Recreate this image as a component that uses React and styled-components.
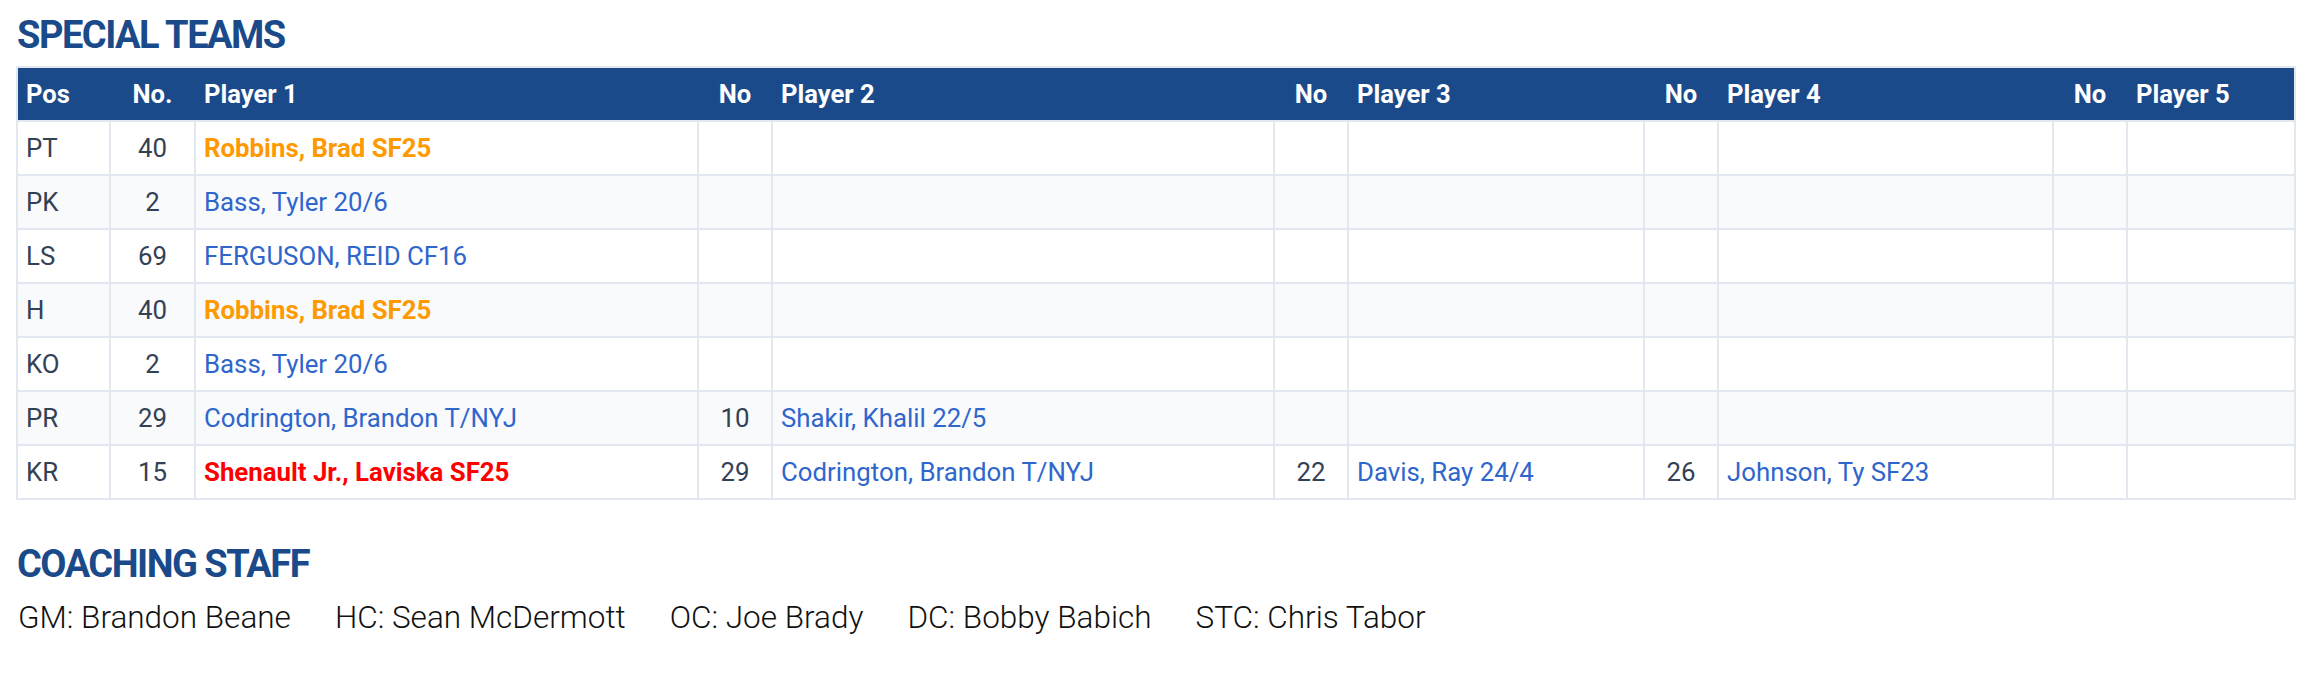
import React from "react";
import styled, { createGlobalStyle } from "styled-components";

const Global = createGlobalStyle`
  html, body { margin: 0; padding: 0; background: #ffffff; }
  body { font-family: Roboto, "Noto Sans", "Liberation Sans", sans-serif; color: #334155; }
`;

const Page = styled.div`
  padding: 0 18px 40px 16px;
`;

const SectionTitle = styled.h2`
  margin: ${(p) => p.$top}px 0 ${(p) => p.$bottom}px 1px;
  font-family: Roboto, "Liberation Sans", sans-serif;
  font-weight: 700;
  font-size: 38px;
  line-height: 36px;
  color: #1b4a8a;
  text-transform: uppercase;
  letter-spacing: -1.5px;
`;

const Table = styled.table`
  width: 100%;
  table-layout: fixed;
  border-collapse: separate;
  border-spacing: 0;
  border: 2px solid #e2e8f0;
  box-sizing: border-box;
  font-size: 25.8px;
`;

const HeadCell = styled.th`
  box-sizing: border-box;
  width: ${(p) => p.$w}px;
  height: 52px;
  padding: 0 8px;
  background: #1b4a8a;
  color: #ffffff;
  font-weight: 700;
  font-size: 25.6px;
  text-align: ${(p) => (p.$center ? "center" : "left")};
  border-left: ${(p) => (p.$first ? "0" : "2px solid transparent")};
  vertical-align: middle;
  white-space: nowrap;
`;

const Row = styled.tr`
  background: ${(p) => (p.$alt ? "#f8fafc" : "#ffffff")};
`;

const Cell = styled.td`
  box-sizing: border-box;
  height: 54px;
  padding: 0 8px;
  border-top: 2px solid #e2e8f0;
  border-left: ${(p) => (p.$first ? "0" : "2px solid #e2e8f0")};
  text-align: ${(p) => (p.$center ? "center" : "left")};
  vertical-align: middle;
  white-space: nowrap;
  color: #334155;
  font-weight: 400;
`;

const PlayerLink = styled.span`
  color: ${(p) =>
    p.$tone === "orange" ? "#ff9900" : p.$tone === "red" ? "#ff0000" : "#2f66cc"};
  font-weight: ${(p) => (p.$tone ? 700 : 400)};
`;

const StaffLine = styled.div`
  display: flex;
  gap: 44px;
  margin-left: 2px;
  font-family: Roboto, "Liberation Sans", sans-serif;
  font-weight: 300;
  font-size: 31.5px;
  line-height: 32px;
  color: #111111;
`;

const StaffItem = styled.span`
  white-space: nowrap;
`;

const columns = [
  { label: "Pos", w: 91, first: true },
  { label: "No.", w: 85, center: true },
  { label: "Player 1", w: 503 },
  { label: "No", w: 74, center: true },
  { label: "Player 2", w: 502 },
  { label: "No", w: 74, center: true },
  { label: "Player 3", w: 296 },
  { label: "No", w: 74, center: true },
  { label: "Player 4", w: 335 },
  { label: "No", w: 74, center: true },
  { label: "Player 5", w: 168 },
];

const rows = [
  { pos: "PT", players: [{ no: "40", name: "Robbins, Brad SF25", tone: "orange" }] },
  { pos: "PK", players: [{ no: "2", name: "Bass, Tyler 20/6" }] },
  { pos: "LS", players: [{ no: "69", name: "FERGUSON, REID CF16" }] },
  { pos: "H", players: [{ no: "40", name: "Robbins, Brad SF25", tone: "orange" }] },
  { pos: "KO", players: [{ no: "2", name: "Bass, Tyler 20/6" }] },
  {
    pos: "PR",
    players: [
      { no: "29", name: "Codrington, Brandon T/NYJ" },
      { no: "10", name: "Shakir, Khalil 22/5" },
    ],
  },
  {
    pos: "KR",
    players: [
      { no: "15", name: "Shenault Jr., Laviska SF25", tone: "red" },
      { no: "29", name: "Codrington, Brandon T/NYJ" },
      { no: "22", name: "Davis, Ray 24/4" },
      { no: "26", name: "Johnson, Ty SF23" },
    ],
  },
];

const staff = [
  "GM: Brandon Beane",
  "HC: Sean McDermott",
  "OC: Joe Brady",
  "DC: Bobby Babich",
  "STC: Chris Tabor",
];

export default function App() {
  return (
    <Page>
      <Global />
      <SectionTitle $top={17} $bottom={13}>Special Teams</SectionTitle>
      <Table>
        <thead>
          <tr>
            {columns.map((c, i) => (
              <HeadCell key={i} $w={c.w} $center={c.center} $first={c.first}>
                {c.label}
              </HeadCell>
            ))}
          </tr>
        </thead>
        <tbody>
          {rows.map((r, ri) => {
            const slots = [];
            for (let k = 0; k < 5; k++) slots.push(r.players[k] || null);
            return (
              <Row key={ri} $alt={ri % 2 === 1}>
                <Cell $first>{r.pos}</Cell>
                {slots.map((p, k) => (
                  <React.Fragment key={k}>
                    <Cell $center>{p ? p.no : ""}</Cell>
                    <Cell>
                      {p ? <PlayerLink $tone={p.tone}>{p.name}</PlayerLink> : ""}
                    </Cell>
                  </React.Fragment>
                ))}
              </Row>
            );
          })}
        </tbody>
      </Table>
      <SectionTitle $top={46} $bottom={20}>Coaching Staff</SectionTitle>
      <StaffLine>
        {staff.map((s) => (
          <StaffItem key={s}>{s}</StaffItem>
        ))}
      </StaffLine>
    </Page>
  );
}
